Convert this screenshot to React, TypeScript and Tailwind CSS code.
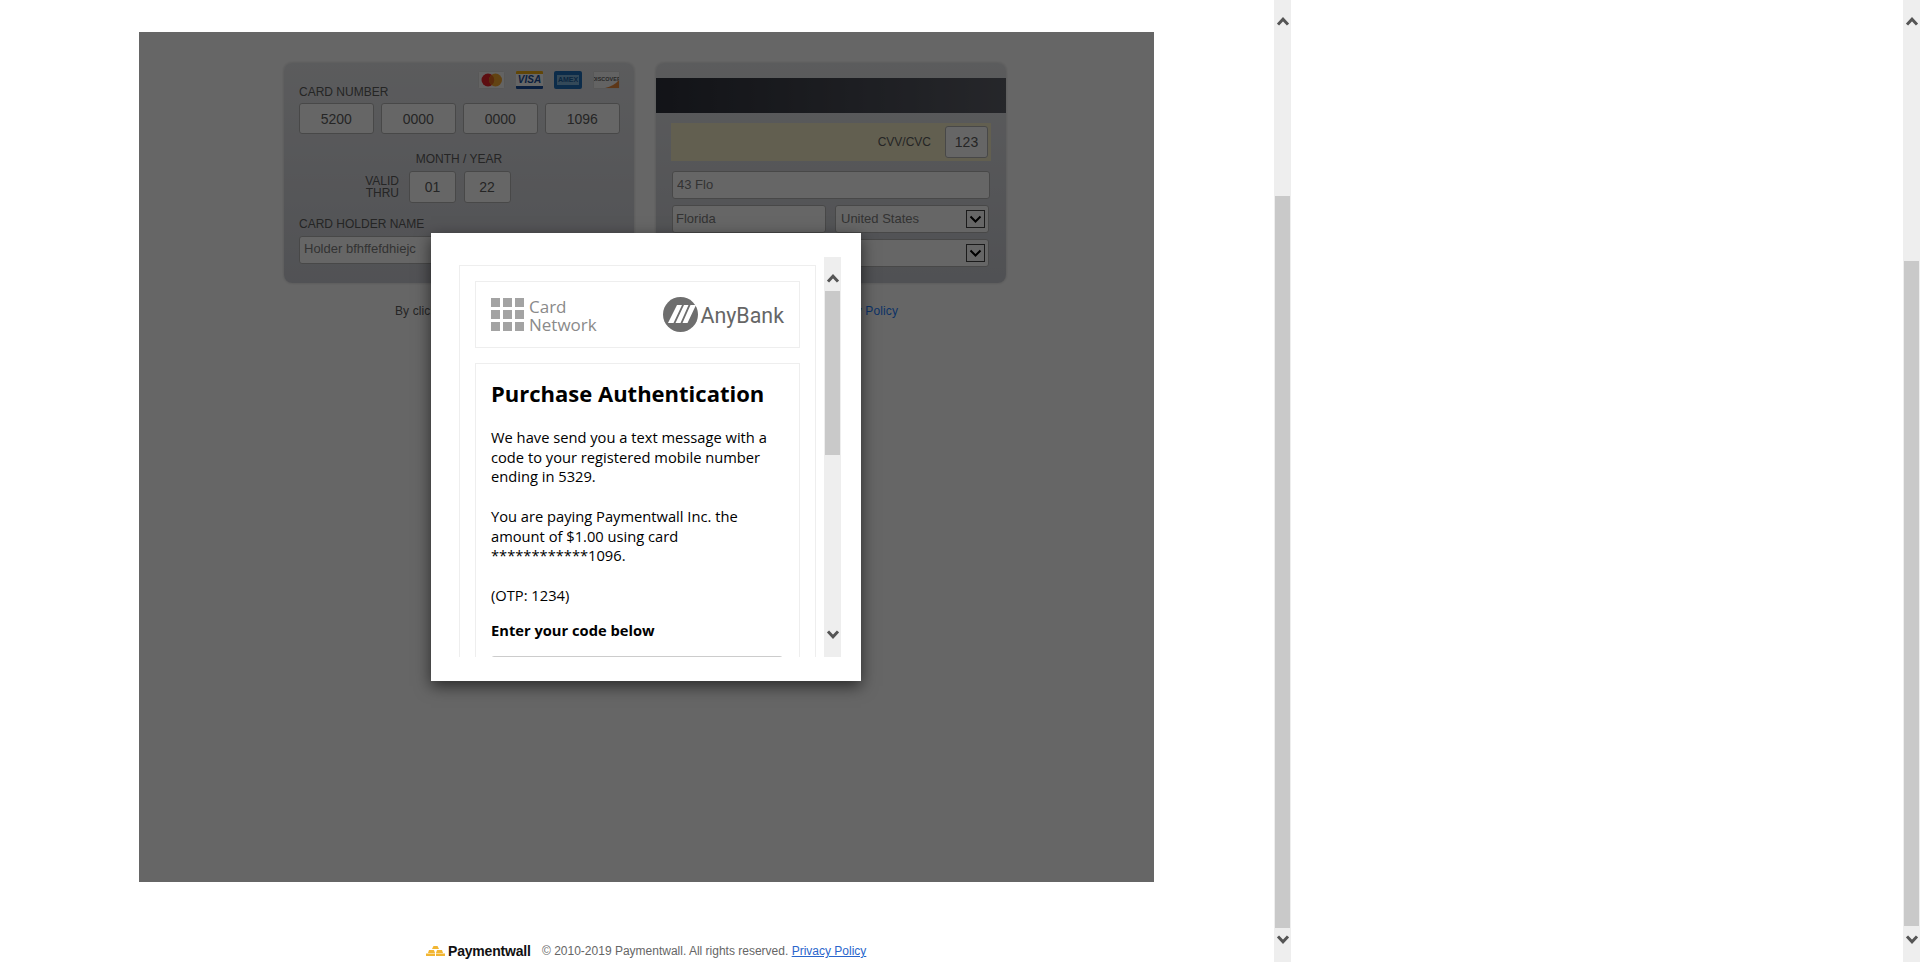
import React from "react";

const Chevron = ({ up, className = "" }: { up?: boolean; className?: string }) => (
  <svg width="12" height="10" viewBox="0 0 12 10" className={className}>
    <path d={up ? "M1 8.6 L6 3.2 L11 8.6" : "M1 1.4 L6 6.8 L11 1.4"} fill="none" stroke="#555" strokeWidth="3" />
  </svg>
);

const Scrollbar = ({ top, thumb, downPad, topPad = 16 }: { top: number; thumb: number; downPad: number; topPad?: number }) => (
  <div className="flex h-full w-[17px] shrink-0 flex-col items-center bg-[#eeeeee]">
    <div className="shrink-0" style={{ height: top, paddingTop: topPad }}>
      <Chevron up className="block" />
    </div>
    <div className="w-[15px] shrink-0 bg-[#c9c9c9]" style={{ height: thumb }} />
    <div style={{ paddingTop: downPad }}>
      <Chevron className="block" />
    </div>
  </div>
);

const Field = ({ value, className = "" }: { value: string; className?: string }) => (
  <input
    readOnly
    value={value}
    className={`rounded-[3px] border border-[#b4b4b4] bg-[#ffffff] text-[#5c5c5c] outline-none ${className}`}
  />
);

const SelectBox = ({ value, className = "" }: { value: string; className?: string }) => (
  <div className={`flex items-center justify-between rounded-[3px] border border-[#b4b4b4] bg-[#ffffff] pl-[5px] pr-[3px] text-[13px] text-[#808080] ${className}`}>
    <span>{value}</span>
    <span className="flex h-[18px] w-[19px] items-center justify-center border border-[#444] bg-[#ffffff]">
      <svg width="13" height="9" viewBox="0 0 13 9">
        <path d="M1.5 1.5 L6.5 6.5 L11.5 1.5" fill="none" stroke="#000" strokeWidth="2" />
      </svg>
    </span>
  </div>
);

const CardLogos = () => (
  <div className="absolute right-[14px] top-[8px] flex gap-[11px]">
    <svg width="27" height="18" viewBox="0 0 27 18">
      <rect x="0.5" y="0.5" width="26" height="17" rx="1" fill="#f8f8f8" stroke="#ddd" />
      <circle cx="10" cy="9" r="6.5" fill="#e8242c" />
      <circle cx="17.5" cy="9" r="6.5" fill="#f6a92f" />
      <path d="M13.7 3.8a6.5 6.5 0 0 1 0 10.4a6.5 6.5 0 0 1 0-10.4z" fill="#e06a1f" />
    </svg>
    <div className="flex h-[18px] w-[27px] flex-col overflow-hidden rounded-[1px] bg-[#ffffff]">
      <div className="h-[3px] bg-[#f2ae14]" />
      <div className="flex flex-1 items-center justify-center font-['Liberation_Sans',sans-serif] text-[10px] font-bold italic leading-none text-[#1a4f9c]">VISA</div>
      <div className="h-[3px] bg-[#1a4f9c]" />
    </div>
    <div className="flex h-[18px] w-[28px] items-center justify-center rounded-[2px] bg-[#1f6fb8]">
      <span className="bg-[#7fb6df] px-[1px] font-['Liberation_Sans',sans-serif] text-[7px] font-bold leading-[10px] text-[#1c5f9e]">AMEX</span>
    </div>
    <div className="relative flex h-[18px] w-[27px] items-center justify-center overflow-hidden rounded-[1px] border border-[#ddd] bg-[#f8f8f8]">
      <span className="font-['Liberation_Sans',sans-serif] text-[5.5px] font-bold leading-none text-[#666]">DISCOVER</span>
      <svg className="absolute bottom-0 right-0" width="14" height="8" viewBox="0 0 14 8">
        <path d="M0 8 Q9 6 14 0 V8 Z" fill="#e98b3c" />
      </svg>
    </div>
  </div>
);

const FormCards = () => (
  <div className="font-['Liberation_Sans',sans-serif]">
    <div className="flex gap-[22px] pl-[145px] pt-[31px]">
      <div className="relative h-[220px] w-[350px] rounded-[8px] bg-gradient-to-b from-[#e4e5e8] to-[#cbcdd4] px-[15px] pt-[22px] shadow-[0_0_3px_rgba(0,0,0,0.2)]">
        <CardLogos />
        <div className="text-[12px] leading-[14px] text-[#5c5c5c]">CARD NUMBER</div>
        <div className="mt-[4px] flex gap-[7.5px]">
          {["5200", "0000", "0000", "1096"].map((v, i) => (
            <Field key={i} value={v} className="h-[31px] w-[74.5px] text-center text-[14px]" />
          ))}
        </div>
        <div className="mt-[18px] w-[320px] text-center text-[12px] leading-[14px] text-[#5c5c5c]">MONTH / YEAR</div>
        <div className="mt-[5px] flex items-center">
          <div className="ml-[66px] w-[34px] text-right text-[12px] leading-[12px] text-[#5c5c5c]">VALID THRU</div>
          <div className="ml-[10px] flex gap-[7.5px]">
            <Field value="01" className="h-[32px] w-[47px] text-center text-[14px]" />
            <Field value="22" className="h-[32px] w-[47px] text-center text-[14px]" />
          </div>
        </div>
        <div className="mt-[14px] text-[12px] leading-[14px] text-[#5c5c5c]">CARD HOLDER NAME</div>
        <Field value="Holder bfhffefdhiejc" className="mt-[5px] h-[28px] w-[320px] px-[4px] pb-[3px] text-[13px] text-[#808080]" />
      </div>
      <div className="h-[220px] w-[350px] rounded-[8px] bg-gradient-to-b from-[#e4e5e8] to-[#c8cad1] pt-[15px] shadow-[0_0_3px_rgba(0,0,0,0.2)]">
        <div className="h-[35px] bg-gradient-to-r from-[#2f323c] to-[#5f616a]" />
        <div className="mx-[15px] mt-[10px] flex h-[38px] items-center justify-end bg-[#f5eec8] pr-[3px]">
          <span className="mr-[14px] text-[12px] text-[#5c5c5c]">CVV/CVC</span>
          <Field value="123" className="h-[32px] w-[43px] text-center text-[14px]" />
        </div>
        <Field value="43 Flo" className="ml-[16px] mt-[10px] block h-[28px] w-[318px] px-[4px] pb-[2px] text-[13px] text-[#808080]" />
        <div className="ml-[16px] mt-[6px] flex gap-[9px]">
          <Field value="Florida" className="h-[28px] w-[154px] px-[3px] pb-[2px] text-[13px] text-[#808080]" />
          <SelectBox value="United States" className="h-[28px] w-[154px]" />
        </div>
        <SelectBox value="Florida" className="ml-[16px] mt-[6px] h-[28px] w-[317px]" />
      </div>
    </div>
    <p className="mt-[21px] text-center text-[12px] leading-[14px] tracking-[0.12px] text-[#5c5c5c]">
      By clicking “Pay Now”, you confirm that you agree to the Terms of Service and{" "}
      <a className="text-[#1e80ff]">Privacy Policy</a>
    </p>
  </div>
);

const AuthModal = () => (
  <div className="absolute left-[292px] top-[201px] flex h-[448px] w-[430px] bg-white pb-[24px] pl-[28px] pr-[20px] pt-[24px] shadow-[0_5px_15px_rgba(0,0,0,0.6)] font-['Open_Sans',sans-serif]">
    <div className="h-[400px] w-[365px] shrink-0 overflow-hidden pr-[8px] pt-[8px]">
      <div className="border border-[#eeeeee] px-[15px] pt-[15px]">
        <div className="flex h-[67px] items-center justify-between border border-[#eeeeee] pl-[15px] pr-[15px]">
          <div className="flex items-center">
            <div className="grid grid-cols-3 gap-[3px]">
              {Array.from({ length: 9 }).map((_, i) => (
                <div key={i} className="h-[9px] w-[9px] bg-[#a3a3a3]" />
              ))}
            </div>
            <div className="ml-[5px] mt-[2px] text-[17px] leading-[18px] text-[#8a8a8a]">
              Card
              <br />
              Network
            </div>
          </div>
          <div className="flex items-center">
            <svg width="35" height="35" viewBox="0 0 35 35">
              <circle cx="17.5" cy="17.5" r="17.5" fill="#6e6e6e" />
              <path d="M5 26 L14 8 H19 L10.5 26 Z M12.5 26 L21 8 H25.5 L17.5 26 Z M19.5 26 L27.5 8 H33 L24.5 26 Z" fill="#fff" />
            </svg>
            <span className="ml-[2px] mt-[2px] font-['Roboto',sans-serif] text-[21.4px] leading-none text-[#666666]">AnyBank</span>
          </div>
        </div>
        <div className="mt-[15px] border border-[#eeeeee] px-[15px] pt-[14px] text-[14.7px] leading-[19.6px] text-black">
          <h1 className="text-[22px] font-bold leading-[30px]">Purchase Authentication</h1>
          <p className="mt-[20px]">We have send you a text message with a code to your registered mobile number ending in 5329.</p>
          <p className="mt-[20.4px]">You are paying Paymentwall Inc. the amount of $1.00 using card ************1096.</p>
          <p className="mt-[20.4px]">(OTP: 1234)</p>
          <p className="mt-[15px] font-bold">Enter your code below</p>
          <div className="mr-[1px] mt-[15px] h-[34px] rounded-[3px] border border-[#cccccc]" />
        </div>
      </div>
    </div>
    <Scrollbar top={34} thumb={164} downPad={175} />
  </div>
);

const Footer = () => (
  <div className="flex h-[80px] items-start pl-[287px] pt-[62px] font-['Liberation_Sans',sans-serif]">
    <div className="flex items-center">
      <svg width="19" height="10" viewBox="0 0 19 10">
        <g fill="#f2b632">
          <path d="M7.5 0h4l1.5 3H6z" />
          <path d="M3 4h5l1 3H2z" />
          <path d="M11 4h5l1 3h-7z" />
          <rect x="0" y="7.5" width="9" height="2.5" />
          <rect x="10" y="7.5" width="9" height="2.5" />
        </g>
      </svg>
      <span className="ml-[3px] w-[81px] whitespace-nowrap text-[14px] font-bold leading-none tracking-[-0.2px] text-[#111]">Paymentwall</span>
      <span className="ml-[13px] whitespace-nowrap text-[12px] leading-none text-[#666666]">
        © 2010-2019 Paymentwall. All rights reserved.{" "}
        <a className="text-[#2a66cc] underline">Privacy Policy</a>
      </span>
    </div>
  </div>
);

export default function App() {
  return (
    <div className="flex h-[962px] w-[1920px] overflow-hidden bg-white">
      <div className="w-[1274px] shrink-0 pl-[139px] pt-[32px]">
        <div className="w-[1015px]">
          <div className="relative h-[850px] bg-white">
            <FormCards />
            <div className="absolute inset-0 bg-black/60" />
            <AuthModal />
          </div>
          <Footer />
        </div>
      </div>
      <Scrollbar top={196} thumb={732} downPad={7} />
      <div className="w-[612px] shrink-0" />
      <Scrollbar top={261} thumb={665} downPad={9} />
    </div>
  );
}
